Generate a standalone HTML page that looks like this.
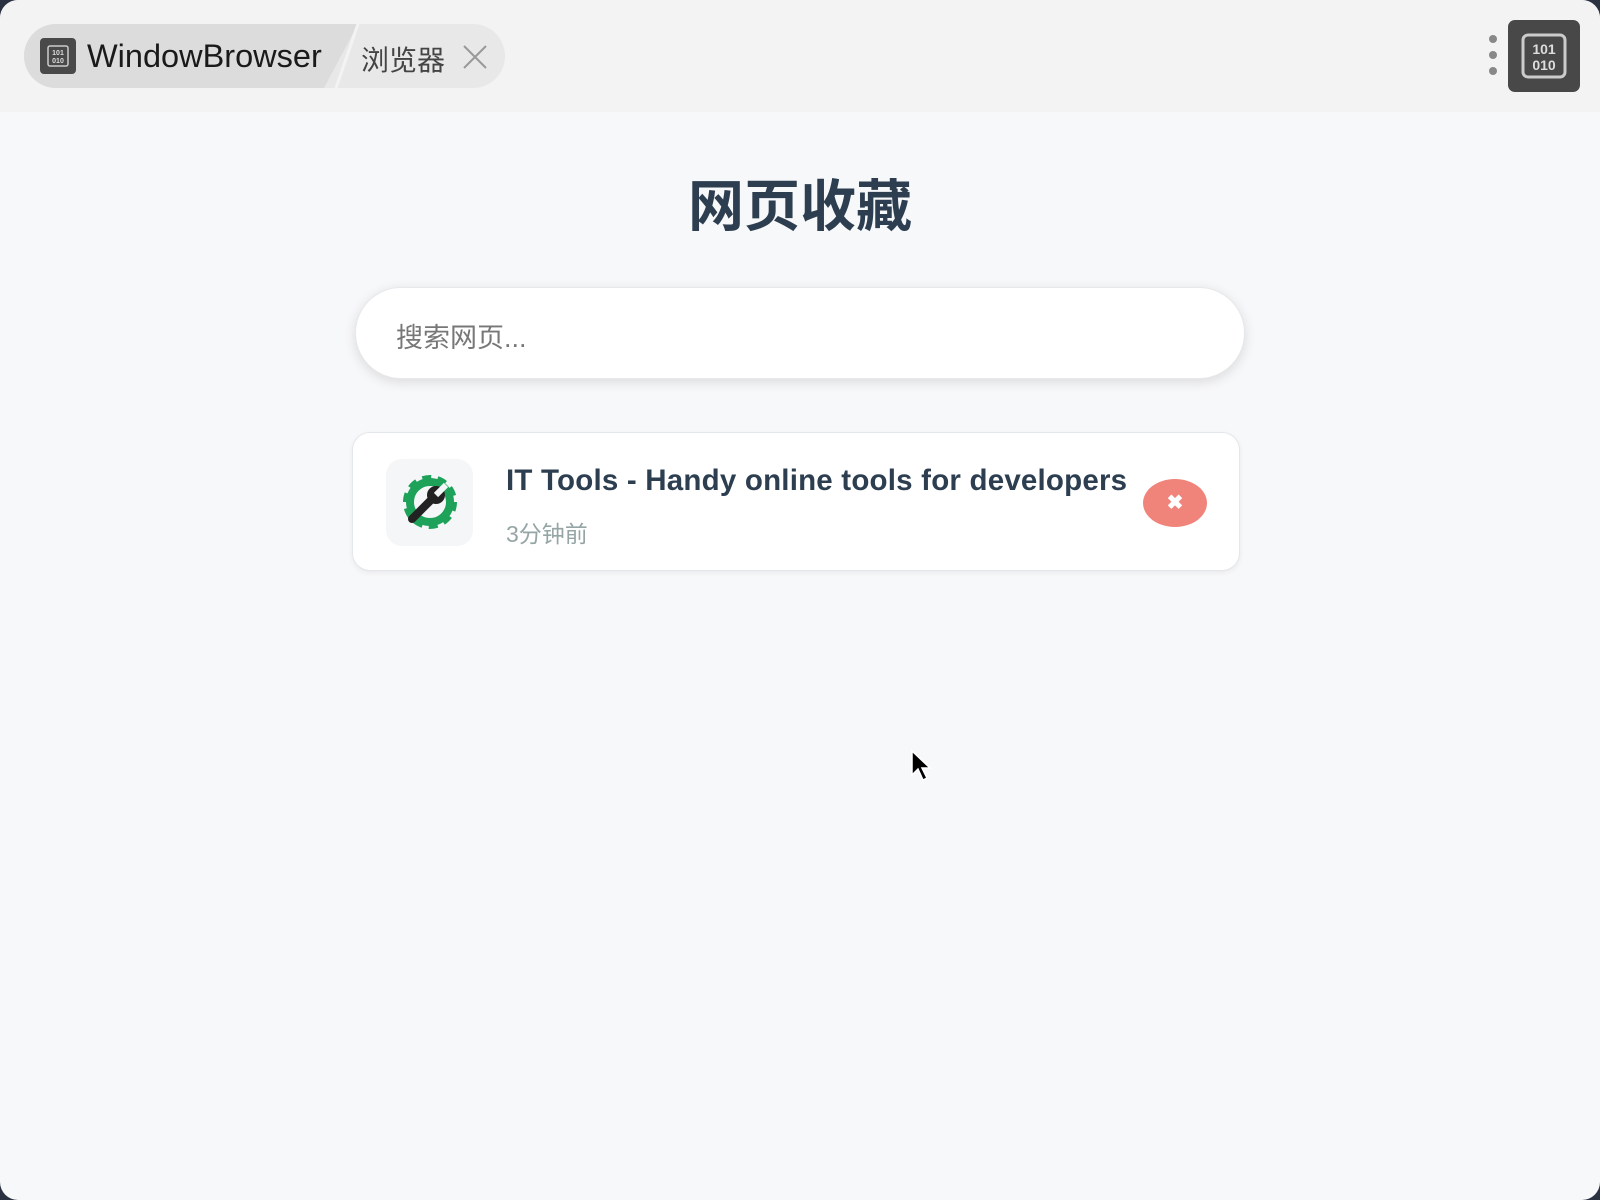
<!DOCTYPE html>
<html><head><meta charset="utf-8"><style>
*{margin:0;padding:0;box-sizing:border-box}
body{width:1600px;height:1200px;background:#2a3140;font-family:"Liberation Sans","Noto Sans CJK SC",sans-serif;overflow:hidden}
.win{position:absolute;left:0;top:0;width:1600px;height:1200px;background:#f7f8fa;border-radius:18px;overflow:hidden}
.bar{position:absolute;left:0;top:0;width:1600px;height:112px;background:#f3f3f3}
.pill{position:absolute;left:24px;top:24px;width:481px;height:64px;border-radius:32px;background:#e8e8e8;overflow:hidden}
.pa{position:absolute;left:0;top:0;width:334px;height:64px;background:#dcdcdc;clip-path:polygon(0 0,100% 0,300px 100%,0 100%)}
.ic{position:absolute;left:16px;top:14px;width:36px;height:36px;background:#494949;border-radius:4px}
.t1{position:absolute;left:63px;top:14px;font-size:32.5px;color:#1a1a1a}
.t2{position:absolute;left:337px;top:15px;font-size:28px;color:#444}
.title{position:absolute;left:0;width:1600px;top:162px;text-align:center;font-size:56px;font-weight:bold;color:#2c3e50;letter-spacing:0px}
.search{position:absolute;left:355px;top:287px;width:890px;height:92px;border-radius:46px;background:#fff;box-shadow:0 3px 12px rgba(0,0,0,.12);border:1px solid #e6e8eb}
.search span{position:absolute;left:40px;top:28px;font-size:27px;color:#777}
.card{position:absolute;left:352px;top:432px;width:888px;height:139px;background:#fff;border:1px solid #e3e6ea;border-radius:18px;box-shadow:0 2px 6px rgba(0,0,0,.06)}
.fav{position:absolute;left:33px;top:26px;width:87px;height:87px;background:#f5f6f8;border-radius:16px}
.ct{position:absolute;left:153px;top:31px;font-size:29.5px;font-weight:bold;color:#2c3e50;letter-spacing:0.2px}
.cs{position:absolute;left:153px;top:82px;font-size:23px;color:#95a5a6}
.del{position:absolute;left:790px;top:46px;width:64px;height:48px;border-radius:50%;background:#f0837a;color:#fff;text-align:center;line-height:48px;font-size:20px;font-weight:bold}
</style></head><body><div class="win">
<div class="bar">
<div class="pill"><div class="pa"></div>
<div class="ic"><svg width="36" height="36" viewBox="0 0 36 36"><rect x="8" y="8" width="20" height="20" rx="2" fill="none" stroke="#ccc" stroke-width="1.5"/><text x="18" y="17" font-size="7" fill="#ddd" text-anchor="middle" font-family="Liberation Sans" font-weight="bold">101</text><text x="18" y="25" font-size="7" fill="#ddd" text-anchor="middle" font-family="Liberation Sans" font-weight="bold">010</text></svg></div>
<div class="t1">WindowBrowser</div>
<svg style="position:absolute;left:300px;top:0" width="40" height="64"><line x1="34" y1="0" x2="12" y2="64" stroke="#f3f3f3" stroke-width="3"/></svg>
<div class="t2">浏览器</div>
<svg style="position:absolute;left:438px;top:20px" width="26" height="26"><path d="M2 2L24 24M24 2L2 24" stroke="#999" stroke-width="2"/></svg>
</div>
<svg style="position:absolute;left:1486px;top:32px" width="14" height="48"><circle cx="7" cy="7" r="4" fill="#888"/><circle cx="7" cy="23" r="4" fill="#888"/><circle cx="7" cy="39" r="4" fill="#888"/></svg>
<div style="position:absolute;left:1508px;top:20px;width:72px;height:72px;background:#484848;border-radius:7px"><svg width="72" height="72"><rect x="15" y="15" width="42" height="42" rx="5" fill="none" stroke="#ccc" stroke-width="3"/><text x="36" y="34" font-size="14" fill="#ddd" text-anchor="middle" font-family="Liberation Sans" font-weight="bold">101</text><text x="36" y="50" font-size="14" fill="#ddd" text-anchor="middle" font-family="Liberation Sans" font-weight="bold">010</text></svg></div>
</div>
<div class="title">网页收藏</div>
<div class="search"><span>搜索网页...</span></div>
<div class="card">
<div class="fav"><svg width="87" height="87" viewBox="0 0 87 87"><g transform="translate(44 43)"><circle r="22" fill="none" stroke="#1ea25a" stroke-width="10" stroke-dasharray="8 5.8"/><circle r="20" fill="none" stroke="#1ea25a" stroke-width="8"/></g><path d="M26 60L44 42" stroke="#222" stroke-width="8" stroke-linecap="round"/><circle cx="50" cy="36" r="9" fill="#222"/><path d="M50 36L60 26" stroke="#f5f6f8" stroke-width="6"/></svg></div>
<div class="ct">IT Tools - Handy online tools for developers</div>
<div class="cs">3分钟前</div>
<div class="del">✖</div>
</div>
<svg style="position:absolute;left:910px;top:749px" width="24" height="34"><path d="M2 2L2 26L8 20L13 31L17 29L12 19L20 19Z" fill="#000" stroke="#fff" stroke-width="1.5"/></svg>
</div></body></html>
